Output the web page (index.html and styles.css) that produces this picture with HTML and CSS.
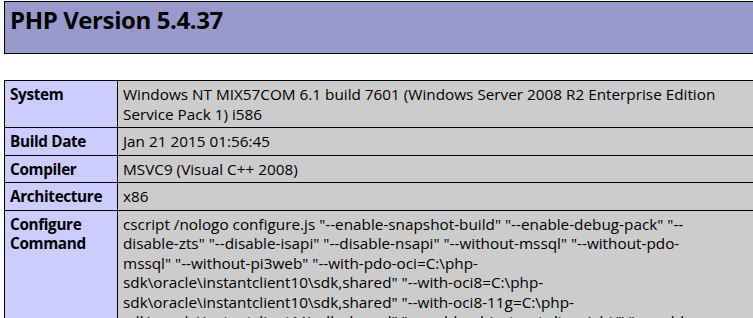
FILE: index.html
```html
<!DOCTYPE html>
<html>
<head>
<meta charset="utf-8">
<link rel="stylesheet" href="styles.css">
<title>phpinfo()</title>
</head>
<body>
<div class="center">
<table class="head">
<tr class="h"><td><h1 class="p">PHP Version 5.4.37</h1></td></tr>
</table>
<table class="info">
<tr><td class="e">System</td><td class="v">Windows NT MIX57COM 6.1 build 7601 (Windows Server 2008 R2 Enterprise Edition Service Pack 1) i586</td></tr>
<tr><td class="e">Build Date</td><td class="v">Jan 21 2015 01:56:45</td></tr>
<tr><td class="e">Compiler</td><td class="v">MSVC9 (Visual C++ 2008)</td></tr>
<tr><td class="e">Architecture</td><td class="v">x86</td></tr>
<tr><td class="e">Configure Command</td><td class="v">cscript /nologo configure.js &quot;--enable-snapshot-build&quot; &quot;--enable-debug-pack&quot; &quot;--disable-zts&quot; &quot;--disable-isapi&quot; &quot;--disable-nsapi&quot; &quot;--without-mssql&quot; &quot;--without-pdo-mssql&quot; &quot;--without-pi3web&quot; &quot;--with-pdo-oci=C:\php-sdk\oracle\instantclient10\sdk,shared&quot; &quot;--with-oci8=C:\php-sdk\oracle\instantclient10\sdk,shared&quot; &quot;--with-oci8-11g=C:\php-sdk\oracle\instantclient11\sdk,shared&quot; &quot;--enable-object-out-dir=../obj/&quot; &quot;--enable-com-dotnet=shared&quot; &quot;--with-mcrypt=static&quot; &quot;--disable-static-analyze&quot; &quot;--with-pgo&quot;</td></tr>
</table>
</div>
</body>
</html>
```
FILE: styles.css
```css
html, body {
  margin: 0;
  padding: 0;
  background: #ffffff;
  color: #000000;
  overflow: hidden;
}
body {
  font-family: "Open Sans", "Noto Sans", sans-serif;
}
.center {
  padding: 1px 0 0 4px;
  width: 800px;
}
table {
  border-collapse: collapse;
  width: 800px;
}
td {
  border: 1px solid #000000;
  padding: 0;
}
.head {
  margin-bottom: 26px;
}
.h td {
  background: #9999cc;
  height: 51px;
  vertical-align: top;
}
.h h1 {
  margin: 0;
  padding: 3px 0 0 5px;
  font-size: 24px;
  line-height: 30px;
  font-weight: bold;
  letter-spacing: -0.4px;
}
.info td {
  font-size: 15.3px;
  line-height: 19.5px;
  padding: 4px 5px 3px 5px;
  vertical-align: top;
}
.e {
  background: #ccccff;
  font-weight: bold;
  letter-spacing: -0.35px;
  width: 102px;
}
.v {
  background: #cccccc;
  padding-right: 82px !important;
}
```
